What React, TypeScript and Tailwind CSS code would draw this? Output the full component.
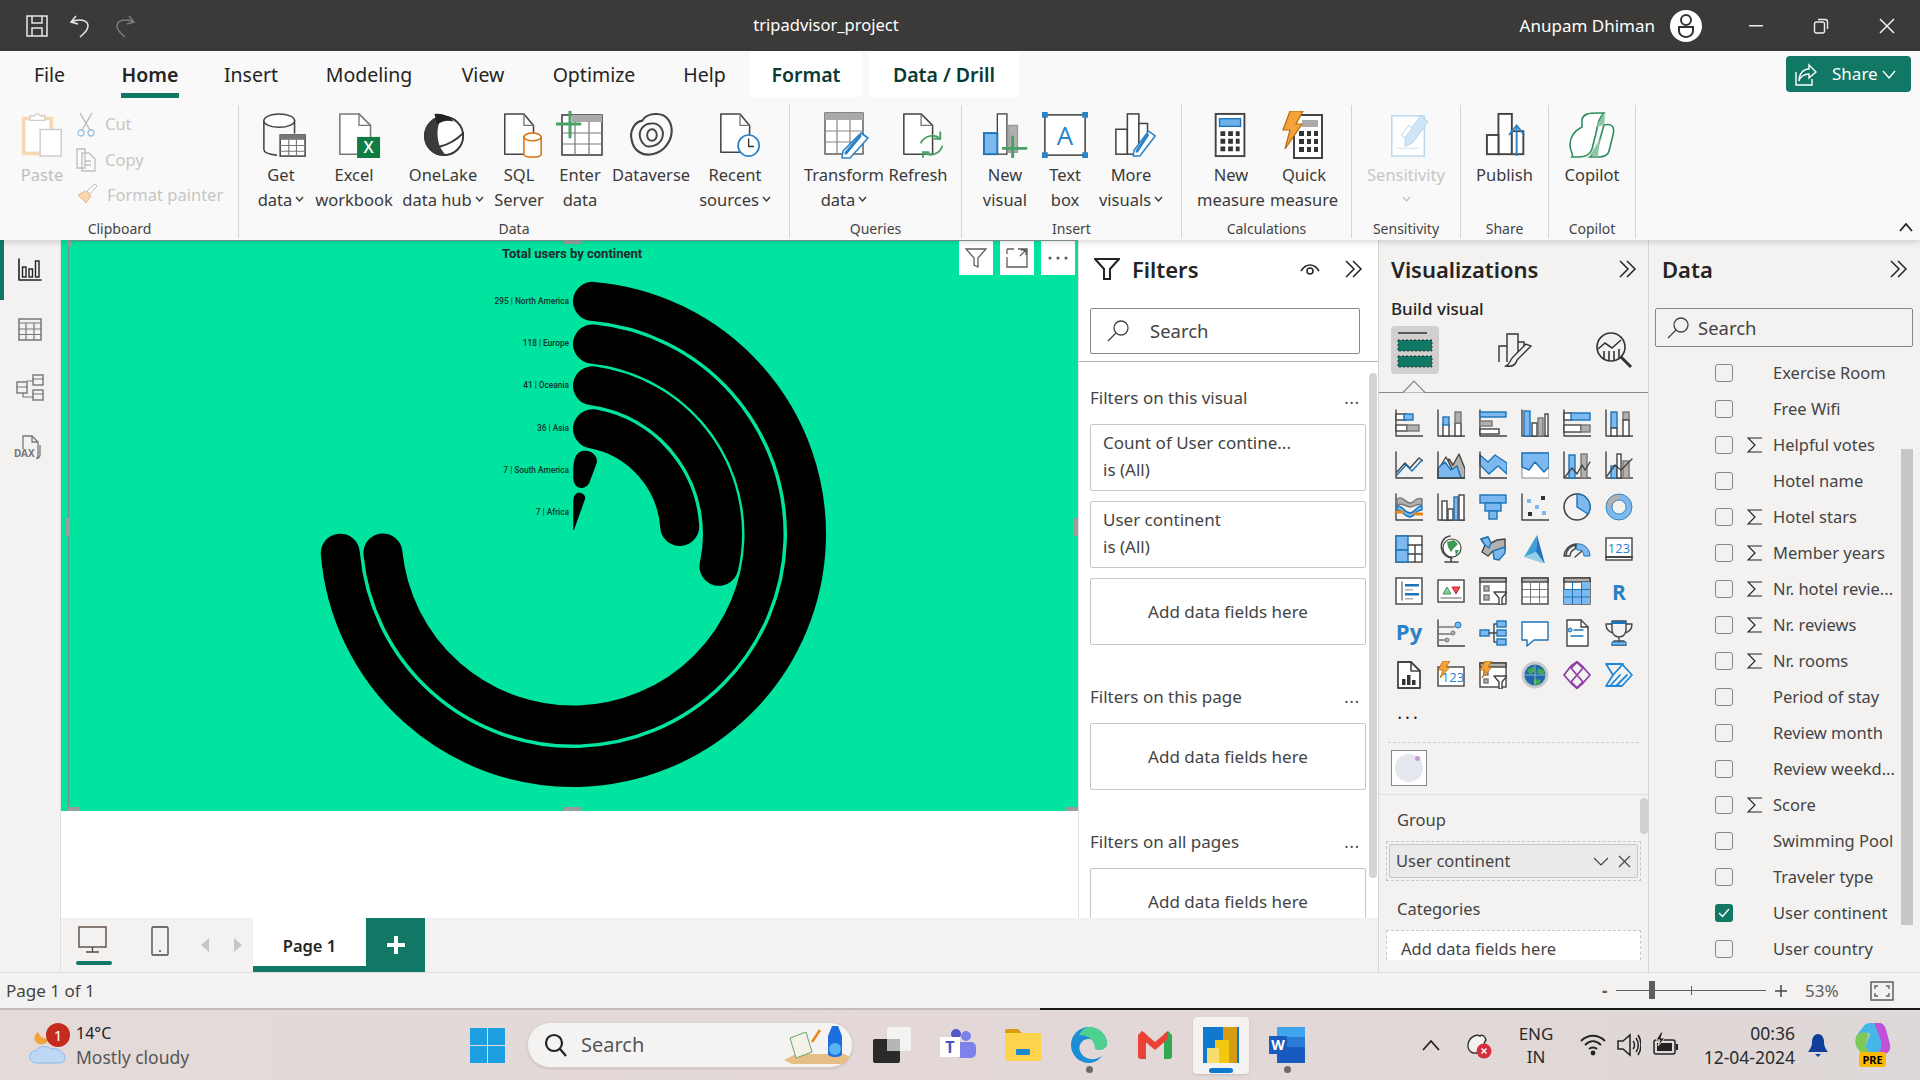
import { ReactNode } from "react";

const D = "#444444";
const B = "#1b74b8";
const L = "#7db9ee";
const G = "#b3b0ad";

// one bar or table cell in the small icons
function R({ x, y, w, h, f = "none", s = D, sw = 1.4 }: { x: number; y: number; w: number; h: number; f?: string; s?: string; sw?: number }) {
  return <rect x={x} y={y} width={w} height={h} fill={f} stroke={s} strokeWidth={sw} />;
}

function P({ d, f = "none", s = D, sw = 1.4 }: { d: string; f?: string; s?: string; sw?: number }) {
  return <path d={d} fill={f} stroke={s} strokeWidth={sw} strokeLinejoin="round" strokeLinecap="round" />;
}

function Ico({ size = 28, box = 28, children }: { size?: number; box?: number; children: ReactNode }) {
  return (
    <svg width={size} height={size} viewBox={`0 0 ${box} ${box}`} fill="none" className="shrink-0">
      {children}
    </svg>
  );
}

const axes = <P d="M1 1V27H28" />;
const table = (
  <>
    <R x={1} y={1} w={26} h={26} f="#fff" />
    <R x={1} y={1} w={26} h={4} f={G} />
    <P d="M9.5 5V27M18.5 5V27M1 12.500H27M1 20H27" s="#777" sw={1} />
  </>
);

const vizIcons: ReactNode[] = [
  <>{axes}<R x={1} y={5} w={10} h={6} f="#fff" /><R x={9} y={5} w={9} h={6} f={L} s={B} /><R x={1} y={16} w={11} h={6} f="#fff" /><R x={12} y={16} w={12} h={6} f={G} s="#777" /></>,
  <>{axes}<R x={6} y={15} w={6} h={12} f="#fff" /><R x={6} y={8} w={6} h={8} f={L} s={B} /><R x={18} y={14} w={6} h={13} f="#fff" /><R x={18} y={3} w={6} h={11} f={G} s="#777" /></>,
  <>{axes}<R x={1} y={3} w={26} h={5} f={L} s={B} /><R x={1} y={12} w={12} h={5} f={G} s="#777" /><R x={1} y={20} w={19} h={5} f="#fff" /></>,
  <>{axes}<R x={3} y={2} w={6} h={25} f={L} s={B} /><R x={11} y={14} w={5} h={13} f="#fff" /><R x={17} y={9} w={5} h={18} f={G} s="#777" /><R x={24} y={5} w={3} h={22} f="#fff" /></>,
  <>{axes}<R x={1} y={4} w={8} h={7} f="#fff" /><R x={8} y={4} w={19} h={7} f={L} s={B} /><R x={1} y={16} w={17} h={7} f="#fff" /><R x={18} y={16} w={9} h={7} f={G} s="#777" /></>,
  <>{axes}<R x={6} y={3} w={6} h={16} f={L} s={B} /><R x={6} y={19} w={6} h={8} f="#fff" /><R x={18} y={3} w={6} h={8} f={G} s="#777" /><R x={18} y={11} w={6} h={16} f="#fff" /></>,

  <>{axes}<P d="M2 21L10 12L15 17L24 7L28 10" /><P d="M2 24L11 14L17 20L27 9" s={B} /></>,
  <><P d="M1 27L12 8L16 14L22 3L28 18V27Z" f={G} /><P d="M1 27V19L9 6L15 18L18 21L24 27Z" f="#fff" /><P d="M1 27V17L8 11L14 19L20 15L24 27Z" f={L} s={B} />{axes}</>,
  <><P d="M1 4L9 11L16 4L28 12V23L19 15L10 23L1 14Z" f={L} s={B} />{axes}</>,
  <><R x={1} y={2} w={27} h={25} f="#fff" s="#aaa" /><P d="M1 2H28V16L23 21L14 11L8 19L1 16Z" f={L} s={B} /></>,
  <>{axes}<R x={6} y={4} w={6} h={23} f={L} s={B} /><R x={18} y={3} w={6} h={24} f={G} s="#777" /><P d="M2 26L9 17L14 23L19 14L22 19L27 11" /></>,
  <>{axes}<R x={6} y={15} w={6} h={12} f={L} s={B} /><R x={18} y={10} w={6} h={17} f={G} s="#777" /><R x={12} y={3} w={4} h={24} f="#fff" /><P d="M2 25L10 14L16 19L27 8" /></>,

  <>{axes}<P d="M2 6C8 2 10 10 15 10C20 10 21 3 27 6V12C21 10 20 14 15 14C10 14 8 9 2 12Z" f={G} s="#777" /><P d="M2 13C8 12 9 20 15 20C21 20 21 12 27 13V17C21 16 20 24 15 24C9 24 8 17 2 17Z" f={L} s={B} /><P d="M2 19H8M20 21H27" s="#e8871e" sw={3} /></>,
  <>{axes}<R x={5} y={8} w={5} h={19} f="#fff" /><R x={11} y={16} w={5} h={11} f="#fff" /><R x={17} y={4} w={4} h={23} f={L} s={B} /><R x={22} y={2} w={5} h={25} f="#fff" /></>,
  <><R x={1} y={2} w={26} h={8} f={L} s={B} /><R x={6} y={10} w={16} h={8} f={L} s={B} /><R x={10} y={18} w={8} h={8} f={L} s={B} /></>,
  <>{axes}<rect x={6} y={6} width={4} height={4} fill={L} /><rect x={14} y={12} width={4} height={4} fill={L} /><rect x={21} y={18} width={4} height={4} fill={L} /><rect x={20} y={3} width={4} height={4} fill="#333" /><rect x={7} y={19} width={4} height={4} fill="#333" /></>,
  <><circle cx={14} cy={14} r={13} fill="#f3f2f1" stroke={D} strokeWidth={1.5} /><P d="M14 14V1A13 13 0 0 1 25 21Z" f={L} s={B} /></>,
  <><circle cx={14} cy={14} r={10} stroke={L} strokeWidth={6} /><path d="M14 4A10 10 0 0 0 4 14" stroke={G} strokeWidth={6} /><circle cx={14} cy={14} r={13} stroke={B} strokeWidth={0.8} /><circle cx={14} cy={14} r={7} stroke={B} strokeWidth={0.8} /></>,

  <><R x={1} y={1} w={26} h={26} f="#fff" /><R x={1} y={1} w={12} h={14} f={L} s={B} /><R x={1} y={15} w={12} h={12} f={L} s={B} /><P d="M13 10H27M20 10V27M13 19H27" /></>,
  <><circle cx={15} cy={13} r={9} fill="#fff" stroke={D} strokeWidth={1.2} /><path d="M10 7L17 5L21 9L17 13L14 17L11 12Z M18 15L22 15L19 21Z" fill="#3a9a52" /><P d="M13 1C6 2 3 9 5 15C6 19 10 22 15 23M14 23V27M8 27H21" sw={1.6} /></>,
  <><P d="M2 4L9 2L12 8L18 5L26 4V15L20 17L14 16L9 21L3 17L6 10Z" f={G} /><P d="M2 4L9 2L12 8L10 13L6 10Z" f={L} s={B} /><P d="M14 16L20 14L26 12V18L20 25L15 24Z" f={L} s={B} /></>,
  <><path d="M16 0L3 22L15 17Z" fill="#3da1d6" /><path d="M16 0L15 17L24 29Z" fill="#1f72c4" /><path d="M15 17L3 22L24 29Z" fill="#5cb7e3" opacity={0.6} /></>,
  <><path d="M3 21A11 11 0 0 1 25 21" stroke={D} strokeWidth={1.4} /><path d="M13 9A12 12 0 0 1 27 21H21A6 6 0 0 0 14 15Z" fill={L} stroke={B} strokeWidth={1} /><P d="M1 21H7A8 8 0 0 1 12 14L13 9A13 13 0 0 0 1 21ZM12 22L19 16" sw={1.4} /></>,
  <><R x={1} y={3} w={26} h={22} f="#fff" /><P d="M1 22H27" sw={2} /><text x={14} y={18} textAnchor="middle" fontSize={13} fill="#2a82d0" fontFamily="'Open Sans',sans-serif">123</text></>,

  <><R x={1} y={1} w={26} h={26} f="#fff" /><P d="M7 5V23" s="#777" /><rect x={10} y={7} width={14} height={2.500} fill={B} /><rect x={10} y={12} width={8} height={1.500} fill={G} /><rect x={10} y={16} width={14} height={2.500} fill={B} /><rect x={10} y={21} width={8} height={1.500} fill={G} /></>,
  <><R x={1} y={3} w={26} h={22} f="#fff" /><P d="M4 21H24" s="#999" /><path d="M6 17L10 10L14 17Z" fill="#8ccf9b" stroke="#3a9a52" /><path d="M15 10H23L19 17Z" fill="#e8505b" stroke="#c4262e" /></>,
  <><R x={1} y={1} w={26} h={26} f="#fff" /><R x={1} y={1} w={26} h={4} f={G} /><R x={5} y={9} w={5} h={5} f={G} s="#777" /><R x={5} y={18} w={5} h={5} f={G} s="#777" /><P d="M15 15H28L23 21V28L20 28V21Z" f="#fff" /></>,
  <>{table}</>,
  <>{table}<rect x={18.500} y={5} width={8.500} height={7.500} fill={L} /><rect x={1} y={12.500} width={8.500} height={7.500} fill={L} /><rect x={9.500} y={12.500} width={17.500} height={7.500} fill={L} /><rect x={1} y={20} width={26} height={7} fill={L} /><P d="M9.500 5V27M18.500 5V27M1 12.500H27M1 20H27" s={B} sw={1} /></>,
  <text x={14} y={23} textAnchor="middle" fontSize={21} fontWeight={700} fill="#2a7fc4" fontFamily="'Open Sans',sans-serif">R</text>,

  <text x={14} y={21} textAnchor="middle" fontSize={22} fontWeight={700} fill="#2a82c7" fontFamily="'Open Sans',sans-serif">Py</text>,
  <>{axes}<P d="M1 8H17M1 15H14M1 21H9" s="#777" /><circle cx={21} cy={6} r={3} fill={L} stroke={B} /><circle cx={16} cy={14} r={2} fill={G} stroke="#777" /><circle cx={10} cy={21} r={2} fill={G} stroke="#777" /></>,
  <><R x={1} y={11} w={9} h={6} f={L} s={B} /><P d="M10 14H15M15 5V23M15 5H18M15 14H18M15 23H18" /><R x={18} y={2} w={9} h={6} f={L} s={B} /><R x={18} y={11} w={9} h={6} f={L} s={B} /><R x={18} y={20} w={9} h={6} f={L} s={B} /></>,
  <P d="M1 3H27V21H13L6 27V21H1Z" f="#fff" s={B} />,
  <><P d="M4 1H18L25 8V27H4Z" f="#fff" /><P d="M18 1V8H25" /><circle cx={7} cy={11} r={2} fill={L} stroke={B} /><P d="M11 11H20" s={B} /><P d="M8 17H20" s={B} /></>,
  <><P d="M7 2H21V11C21 16 17 18 14 18C11 18 7 16 7 11ZM7 5H1C1 11 4 13 8 14M21 5H27C27 11 24 13 20 14M14 18V22M9 22H19L21 26H7Z" /><rect x={7} y={2} width={14} height={3} fill={B} /><rect x={7} y={23} width={14} height={3} fill={L} stroke={B} /></>,

  <><P d="M3 1H16L25 10V27H3Z" f="#fff" sw={1.8} /><P d="M16 1V10H25" sw={1.6} /><rect x={7} y={18} width={3.500} height={6} fill="#333" /><rect x={12} y={14} width={3.500} height={10} fill="#333" /><rect x={17} y={19} width={3.500} height={5} fill="#333" /></>,
  <><R x={1} y={6} w={26} h={19} f="#fff" /><text x={16} y={21} textAnchor="middle" fontSize={13} fill="#2a82d0" fontFamily="'Open Sans',sans-serif">123</text><path d="M6 0H13L9 6H13L3 17L6 9H1Z" fill="#f2a33a" stroke="#b96b0c" strokeWidth={0.8} /></>,
  <><R x={1} y={2} w={26} h={24} f="#fff" /><R x={1} y={2} w={26} h={4} f={G} /><R x={5} y={10} w={4} h={4} f={G} s="#777" /><R x={5} y={18} w={4} h={4} f={G} s="#777" /><P d="M15 15H28L23 21V28L20 28V21Z" f="#fff" /><path d="M6 0H13L9 6H13L3 17L6 9H1Z" fill="#f2a33a" stroke="#b96b0c" strokeWidth={0.8} /></>,
  <><circle cx={14} cy={14} r={13.500} fill="#c9c9c9" /><circle cx={14} cy={14} r={10.500} fill="#1f68ad" /><path d="M6 9L13 5L14 10L9 14ZM17 7L24 10L22 14L16 12ZM13 18L20 19L18 24L13 23Z" fill="#3fa850" /><P d="M4 14H24M14 4V24" s="#d7d7d7" sw={0.6} /></>,
  <><P d="M8 5L14 0.800L20 6L27 14L20 22L14 27.200L8 22L1 14Z" s="#8f3fa5" sw={1.8} /><P d="M14 1L20 7L14 14L8 7ZM14 14L20 21L14 27L8 21Z" s="#8f3fa5" sw={1.8} /></>,
  <><P d="M1 3H17L27 14L17 25H1L8 14Z" s="#1f88d9" sw={1.8} /><P d="M8 14L18 3M5 25L15 14M11 25L22 14" s="#1f88d9" sw={1.8} /></>,
];

const fields = [
  ["Exercise Room", 0],
  ["Free Wifi", 0],
  ["Helpful votes", 1],
  ["Hotel name", 0],
  ["Hotel stars", 1],
  ["Member years", 1],
  ["Nr. hotel revie...", 1],
  ["Nr. reviews", 1],
  ["Nr. rooms", 1],
  ["Period of stay", 0],
  ["Review month", 0],
  ["Review weekd...", 0],
  ["Score", 1],
  ["Swimming Pool", 0],
  ["Traveler type", 0],
  ["User continent", 0],
  ["User country", 0],
] as const;

const tabs = [
  ["File", "w-[99px]", ""],
  ["Home", "w-[102px]", "font-semibold"],
  ["Insert", "w-[100px]", ""],
  ["Modeling", "w-[136px]", ""],
  ["View", "w-[92px]", ""],
  ["Optimize", "w-[130px]", ""],
  ["Help", "w-[91px]", ""],
];

function Chevrons() {
  return (
    <svg width="20" height="20" viewBox="0 0 20 20" fill="none" stroke="#252423" strokeWidth="1.5">
      <path d="M2 2L10 10L2 18M9 2L17 10L9 18" />
    </svg>
  );
}

function SearchGlyph() {
  return (
    <svg width="24" height="24" viewBox="0 0 24 24" fill="none" stroke="#444" strokeWidth="1.3">
      <circle cx="15" cy="9" r="7" />
      <path d="M10 14L2 22" />
    </svg>
  );
}

function Dots() {
  return <span className="text-[#444] text-[16px] leading-none tracking-[1px]">...</span>;
}

function FilterCard({ a, b }: { a: string; b: string }) {
  return (
    <div className="w-[276px] h-[67px] border border-[#c8c6c4] rounded-[2px] pl-[12px] pt-[4px] text-[17px] leading-[27px] text-[#444]">
      <div>{a}</div>
      <div>{b}</div>
    </div>
  );
}

function AddCard() {
  return (
    <div className="w-[276px] h-[67px] shrink-0 border border-[#c8c6c4] rounded-[2px] flex items-center justify-center text-[17px] text-[#444]">
      Add data fields here
    </div>
  );
}

function RibbonBtn({ w, icon, a, b, caret, off, ic = "" }: { w: string; icon: ReactNode; a: string; b?: string; caret?: boolean; off?: boolean; ic?: string }) {
  return (
    <div className={`${w} flex flex-col items-center shrink-0 ${off ? "text-[#c8c6c4]" : "text-[#3b3a39]"}`}>
      <div className={`h-[51px] pb-[4px] flex items-center justify-center ${ic}`}>{icon}</div>
      <div className="h-[25px] leading-[25px] whitespace-nowrap">{a}</div>
      <div className="h-[25px] leading-[25px] whitespace-nowrap flex items-center gap-[3px]">
        {b}
        {caret && (
          <svg width="9" height="7" viewBox="0 0 9 7" fill="none" stroke="currentColor" strokeWidth="1.4">
            <path d="M1 1L4.500 5L8 1" />
          </svg>
        )}
      </div>
    </div>
  );
}

function Group({ w, pl, label, children }: { w: string; pl: string; label: string; children: ReactNode }) {
  return (
    <div className={`${w} h-[133px] shrink-0 border-r border-[#d6d4d2] flex flex-col`}>
      <div className={`${pl} h-[108px] flex pt-[6px] text-[16.500px]`}>{children}</div>
      <div className="mt-auto text-center text-[14px] leading-[18px] text-[#444]">{label}</div>
    </div>
  );
}

const icons = {
  getData: (
    <Ico size={46} box={48}>
      <P d="M3 9V39C3 42 8 44 16 45M35 9V22" sw={1.6} />
      <ellipse cx={19} cy={9} rx={16} ry={7} fill="#fff" stroke={D} strokeWidth={1.6} />
      <R x={20} y={24} w={26} h={22} f="#fff" sw={1.6} />
      <rect x={20} y={24} width={26} height={5} fill="#777" />
      <P d="M29 29V46M37 29V46M20 35H46M20 41H46" s="#777" sw={1.2} />
    </Ico>
  ),
  excel: (
    <Ico size={46} box={48}>
      <P d="M4 2H24L36 14V44H4Z" f="#fff" s="#777" sw={1.6} />
      <P d="M24 2V14H36" s="#777" />
      <rect x={22} y={26} width={24} height={22} fill="#107c41" />
      <text x={34} y={43} textAnchor="middle" fontSize={17} fontWeight={600} fill="#fff" fontFamily="'Open Sans',sans-serif">X</text>
    </Ico>
  ),
  onelake: (
    <Ico size={46} box={48}>
      <circle cx={24} cy={25} r={20} fill="#fff" stroke="#333" strokeWidth={2} />
      <path d="M4 25C4 14 12 5 22 4C18 12 16 20 18 30C19 36 22 41 26 45C13 45 4 36 4 25Z" fill="#3a3a3a" />
      <path d="M14 2C22 1 30 4 34 10C28 8 22 9 17 13Z" fill="#222" />
      <P d="M20 36C28 34 36 30 44 22" s="#333" sw={2} />
    </Ico>
  ),
  sql: (
    <Ico size={46} box={48}>
      <P d="M6 2H26L36 14V44H6Z" f="#fff" sw={1.6} />
      <P d="M26 2V14H36" s="#777" />
      <P d="M26 26V44C26 48 44 48 44 44V26" f="#fff" s="#d9730d" sw={1.6} />
      <ellipse cx={35} cy={26} rx={9} ry={4} fill="#fff" stroke="#d9730d" strokeWidth={1.6} />
    </Ico>
  ),
  enter: (
    <Ico size={48} box={48}>
      <R x={6} y={4} w={40} h={40} f="#fff" sw={1.6} />
      <rect x={16} y={4} width={30} height={7} fill="#aaa" />
      <P d="M19 11V44M33 11V44M6 22H46M6 33H46" s="#777" sw={1.2} />
      <P d="M14 0V26M1 13H24" s="#47a266" sw={3} />
    </Ico>
  ),
  dataverse: (
    <Ico size={46} box={48}>
      <path d="M4 30C1 20 7 10 15 9C19 1 36 -1 42 8C48 16 46 28 40 35C33 44 20 47 12 42C7 39 5 35 4 30Z" stroke="#444" strokeWidth={2.200} />
      <path d="M13 28C10 19 17 12 24 12C33 11 38 19 36 26C34 34 24 38 18 35C15 33 14 31 13 28Z" stroke="#444" strokeWidth={2} />
      <ellipse cx={25} cy={24} rx={5} ry={6} stroke="#444" strokeWidth={2} />
    </Ico>
  ),
  recent: (
    <Ico size={46} box={48}>
      <P d="M4 2H24L34 14V42H4Z" f="#fff" sw={1.6} />
      <P d="M24 2V14H34" s="#777" />
      <circle cx={33} cy={35} r={11} fill="#fff" stroke="#2a82c7" strokeWidth={1.8} />
      <P d="M33 28V36H38" s="#333" sw={1.400} />
    </Ico>
  ),
  transform: (
    <Ico size={48} box={48}>
      <R x={3} y={2} w={38} h={41} f="#fff" s="#555" />
      <rect x={3} y={2} width={38} height={7} fill="#aaa" />
      <P d="M15 9V43M28 9V43M3 20H41M3 31H41" s="#888" sw={1.2} />
      <P d="M39 22L46 27L28 47L20 47L21 40Z" f="#fff" s="#2a82c7" sw={1.600} />
      <P d="M38 25L24 42" s="#2a82c7" sw={3} />
    </Ico>
  ),
  refresh: (
    <Ico size={46} box={48}>
      <P d="M4 2H22L34 14V44H4Z" f="#fff" sw={1.6} />
      <P d="M22 2V14H34" s="#777" />
      <P d="M22 32A13 13 0 0 1 42 28M44 36A13 13 0 0 1 24 42" s="#47a266" sw={2} />
      <P d="M42 21V28H36M24 47V42H30" s="#47a266" sw={2} />
    </Ico>
  ),
  newVisual: (
    <Ico size={46} box={48}>
      <R x={16} y={2} w={10} h={42} f="#fff" />
      <R x={28} y={14} w={9} h={28} f="#b3b0ad" s="#999" />
      <R x={2} y={22} w={14} h={22} f={L} s={B} sw={2} />
      <P d="M32 26V48M22 38H46" s="#47a266" sw={3} />
    </Ico>
  ),
  textBox: (
    <Ico size={46} box={48}>
      <R x={3} y={3} w={42} h={42} f="#fff" sw={1.6} />
      <rect x={0} y={0} width={6} height={6} fill="#2a82c7" />
      <rect x={42} y={0} width={6} height={6} fill="#2a82c7" />
      <rect x={0} y={42} width={6} height={6} fill="#2a82c7" />
      <rect x={42} y={42} width={6} height={6} fill="#2a82c7" />
      <text x={24} y={34} textAnchor="middle" fontSize={27} fill="#2a82c7" fontFamily="'Open Sans',sans-serif">A</text>
    </Ico>
  ),
  more: (
    <Ico size={46} box={48}>
      <R x={3} y={18} w={12} h={26} f="#fff" sw={1.6} />
      <R x={15} y={2} w={12} h={42} f="#fff" sw={1.6} />
      <R x={27} y={12} w={9} h={20} f="#fff" sw={1.6} />
      <P d="M37 20L44 25L28 46L21 46L22 40Z" f="#fff" s="#2a82c7" sw={1.6} />
      <P d="M36 24L25 41" s="#2a82c7" sw={3} />
    </Ico>
  ),
  measure: (
    <Ico size={46} box={48}>
      <R x={8} y={2} w={30} h={44} f="#fff" sw={2} />
      <R x={12} y={7} w={22} h={8} f="#6cb0ea" s={B} />
      <path d="M13 20H18V25H13ZM21 20H26V25H21ZM29 20H33V25H29ZM13 28H18V33H13ZM21 28H26V33H21ZM29 28H33V33H29ZM13 36H18V41H13ZM21 36H26V41H21ZM29 36H33V41H29Z" fill="#333" />
    </Ico>
  ),
  quick: (
    <Ico size={48} box={48}>
      <R x={16} y={4} w={28} h={43} f="#fff" sw={2} />
      <rect x={24} y={9} width={16} height={7} fill="#aaa" />
      <path d="M21 20H26V25H21ZM29 20H33V25H29ZM36 20H40V25H36ZM21 28H26V33H21ZM29 28H33V33H29ZM36 28H40V33H36ZM21 36H26V41H21ZM29 36H33V41H29ZM36 36H40V41H36Z" fill="#333" />
      <path d="M12 0H25L18 13H24L7 38L12 19H5Z" fill="#f2a33a" stroke="#b96b0c" strokeWidth={1.200} />
    </Ico>
  ),
  sens: (
    <Ico size={46} box={48}>
      <R x={6} y={4} w={34} h={42} f="#fff" s="#bcd9ee" sw={1.6} />
      <path d="M20 26L36 4L44 10L28 32L20 36Z" fill="#cfe4f4" stroke="#b5d4ea" />
      <path d="M16 24L24 14L27 17L20 27Z" fill="#fff" stroke="#b5d4ea" />
      <P d="M12 38H34" s="#d5e7f4" />
    </Ico>
  ),
  publish: (
    <Ico size={46} box={48}>
      <R x={14} y={2} w={14} h={42} f="#fff" sw={2} />
      <R x={2} y={24} w={12} h={20} f="#fff" sw={2} />
      <R x={28} y={20} w={12} h={24} f="#fff" sw={2} />
      <path d="M25 24L33 14L41 24M33 14V46" stroke="#2a82c7" strokeWidth={2} />
    </Ico>
  ),
  copilot: (
    <Ico size={48} box={48}>
      <path d="M14 8C16 3 20 2 30 2H36C30 8 30 14 28 22L24 38C22 44 18 46 10 46H4C6 44 2 40 2 34C2 26 6 20 14 16Z" fill="#fff" stroke="#2d8f5f" strokeWidth={1.6} />
      <path d="M36 14C44 12 47 16 45 24L41 40C40 45 36 46 30 46H22C28 42 30 36 32 28Z" fill="#fff" stroke="#2d8f5f" strokeWidth={1.6} />
      <path d="M28 16L36 2C38 4 36 14 36 14ZM22 44L32 28L30 46Z" fill="#8fc7a5" />
    </Ico>
  ),
  paste: (
    <Ico size={44} box={48}>
      <path d="M4 6H34V44H4Z" fill="#fff" stroke="#f5d9b5" strokeWidth={4} />
      <path d="M11 8V3H16L19 0L22 3H27V8Z" fill="#fff" stroke="#d0ceca" strokeWidth={1.400} />
      <R x={22} y={18} w={23} h={29} f="#fff" s="#cfcdca" sw={1.6} />
    </Ico>
  ),
};

const railIcons = [
  <Ico key="r" size={24} box={24}>
    <P d="M1 1V22H23" s="#222" sw={1.6} />
    <R x={4.500} y={9} w={3.500} h={10} s="#222" />
    <R x={11} y={11} w={3.500} h={8} s="#222" />
    <R x={17.500} y={3} w={3.500} h={16} s="#222" />
  </Ico>,
  <Ico key="t" size={24} box={24}>
    <R x={1} y={1} w={22} h={21} s="#777" sw={1.5} />
    <P d="M1 5H23M8 5V22M16 5V22M1 11H23M1 16.500H23" s="#777" sw={1.2} />
  </Ico>,
  <Ico key="m" size={28} box={28}>
    <R x={1} y={9} w={10} h={11} s="#777" sw={1.4} />
    <R x={17} y={2} w={10} h={10} s="#777" sw={1.4} />
    <R x={17} y={17} w={10} h={10} s="#777" sw={1.4} />
    <P d="M11 8H17M7 20V24H17M1 14H11M17 6H27M17 21H27" s="#777" sw={1.2} />
  </Ico>,
];

function Chart() {
  // arcs run clockwise from 12 o'clock, centre is the middle of the rings
  const cx = 512;
  const cy = 294;
  const point = (r: number, a: number) => {
    const t = (a * Math.PI) / 180;
    return `${cx + r * Math.sin(t)} ${cy - r * Math.cos(t)}`;
  };
  const rings = [
    [233.5, 265.3],
    [191, 264.3],
    [149.5, 102.5],
    [107, 86],
  ];
  return (
    <svg width="1016" height="571" viewBox="0 0 1016 571" className="absolute left-0 top-0">
      {rings.map(([r, end]) => {
        const start = (Math.asin(19.5 / r) * 180) / Math.PI;
        return (
          <path
            key={r}
            d={`M${point(r, start)}A${r} ${r} 0 ${end - start > 180 ? 1 : 0} 1 ${point(r, end)}`}
            stroke="#000"
            strokeWidth="39"
            strokeLinecap="round"
            fill="none"
          />
        );
      })}
      <path d="M512.300 230C512.300 217 516 210.700 524 210.700C532 210.700 537 217 535.700 223L528.300 243C526 247 522 248 520.700 248C515 248 512.300 243 512.300 238Z" fill="#000" />
      <path d="M512.300 261.700C512.300 255 515 252.700 518 252.700C522 252.700 525 256 524 259L513 290H512.300Z" fill="#000" />
    </svg>
  );
}

const chartLabels = ["295 | North America", "118 | Europe", "41 | Oceania", "36 | Asia", "7 | South America", "7 | Africa"];

function Taskbar() {
  return (
    <div className="relative h-[72px] shrink-0 flex items-center bg-gradient-to-r from-[#e4dad8] via-[#e3d8d7] to-[#dfd8d8] border-t-[2px] border-[#c4bdba] text-[#2b2b2b]">
      <div className="absolute left-[1040px] right-0 -top-[2px] h-[2px] bg-[#1a1a1a]" />
      <div className="relative ml-[29px] w-[47px] h-[44px] shrink-0">
        <svg width="38" height="44" viewBox="0 0 38 44" fill="none" className="absolute left-0 top-0">
          <path d="M9 9C11 14 15 16 20 16C18 21 12 23 8 20C4 17 5 12 9 9Z" fill="#f2a33a" />
          <path d="M8 40C2 40 0 36 1 32C2 29 4 28 7 28C9 23 18 22 22 26C28 24 36 29 36 35C36 38 34 40 30 40Z" fill="#bcd8f4" stroke="#8ebbe8" />
        </svg>
        <div className="absolute left-[17px] top-0 w-[24px] h-[24px] rounded-full bg-[#c42b1c] text-white text-[15px] leading-[24px] text-center">1</div>
      </div>
      <div className="w-[394px] shrink-0 text-[17.500px] leading-[24px] -mt-[1px]">
        <div className="text-[#222] text-[16px]">14°C</div>
        <div className="text-[#555]">Mostly cloudy</div>
      </div>
      <svg width="35" height="35" viewBox="0 0 35 35" className="shrink-0">
        <path d="M0 0H17V17H0ZM18 0H35V17H18ZM0 18H17V35H0ZM18 18H35V35H18Z" fill="#1e9fe0" />
      </svg>
      <div className="ml-[22px] w-[326px] h-[46px] shrink-0 rounded-full bg-[#f5f3f2] border border-[#d8d2d0] flex items-center pl-[16px] shadow-sm">
        <svg width="24" height="24" viewBox="0 0 24 24" fill="none" stroke="#222" strokeWidth="2.200" className="shrink-0">
          <circle cx="10" cy="10" r="8" />
          <path d="M16 16L22 23" />
        </svg>
        <span className="ml-[13px] text-[20px] text-[#555] w-[66px] shrink-0">Search</span>
        <svg width="66" height="42" viewBox="0 0 66 42" fill="none" className="ml-[137px] shrink-0">
          <path d="M0 36L12 30H60L66 33L60 40H8Z" fill="#e5bf86" />
          <path d="M6 14L22 8L28 28L12 34Z" fill="#f3f2e8" stroke="#6aa56a" />
          <path d="M28 18L36 6" stroke="#e8871e" strokeWidth="2.500" />
          <path d="M44 12L48 2H54L58 12V30C58 34 44 34 44 30Z" fill="#1d6fe0" />
          <ellipse cx="51" cy="25" rx="6" ry="6" fill="#57b4f2" />
        </svg>
      </div>
      <svg width="38" height="36" viewBox="0 0 38 36" className="ml-[20px] shrink-0">
        <rect x="14" y="0" width="24" height="24" rx="2" fill="#f5f3f2" />
        <rect x="0" y="12" width="27" height="24" rx="2" fill="#2a2a2a" />
        <rect x="14" y="12" width="13" height="12" fill="#b8b6b4" />
      </svg>
      <svg width="36" height="32" viewBox="0 0 36 32" className="ml-[29px] shrink-0">
        <circle cx="26" cy="7" r="5" fill="#7b83eb" />
        <rect x="16" y="13" width="20" height="16" rx="5" fill="#7b83eb" />
        <circle cx="16" cy="5" r="5" fill="#5059c9" />
        <rect x="0" y="8" width="20" height="20" fill="#fff" />
        <text x="10" y="24" textAnchor="middle" fontSize="16" fontWeight="700" fill="#4b53bc" fontFamily="'Open Sans',sans-serif">T</text>
      </svg>
      <svg width="36" height="32" viewBox="0 0 36 32" className="ml-[29px] shrink-0">
        <path d="M0 2C0 1 1 0 2 0H13L17 4H0Z" fill="#d89b12" />
        <rect x="0" y="4" width="36" height="28" rx="2" fill="#fcd34d" />
        <rect x="11" y="20" width="14" height="6" rx="1" fill="#1e88d0" />
      </svg>
      <div className="relative ml-[30px] w-[36px] h-[36px] shrink-0">
        <svg width="36" height="36" viewBox="0 0 36 36">
          <path d="M18 0C28 0 36 8 36 16C36 22 30 24 24 22C28 18 24 12 18 12C10 12 6 20 10 26C14 33 24 34 31 29C27 34 22 36 18 36C8 36 0 28 0 18C0 8 8 0 18 0Z" fill="#1b8ed4" />
          <path d="M18 0C28 0 36 8 36 16C36 22 30 24 24 22C24 14 18 8 8 8C11 3 14 0 18 0Z" fill="#4ed08e" />
        </svg>
        <div className="absolute left-[15px] top-[39px] w-[7px] h-[7px] rounded-full bg-[#6b6b6b]" />
      </div>
      <svg width="34" height="28" viewBox="0 0 34 28" className="ml-[31px] shrink-0">
        <path d="M0 4L4 0L8 3V28H3C1 28 0 27 0 25Z" fill="#ea4335" />
        <path d="M34 4L30 0L26 3V28H31C33 28 34 27 34 25Z" fill="#34a853" />
        <path d="M4 0L17 11L30 0L30 8L17 19L4 8Z" fill="#ea4335" />
      </svg>
      <div className="relative ml-[21px] w-[56px] h-[57px] shrink-0 rounded-[4px] bg-[#f5f3f2] shadow-sm flex items-center justify-center">
        <svg width="36" height="36" viewBox="0 0 36 36">
          <rect width="36" height="36" fill="#0f79d0" />
          <rect x="20" y="0" width="14" height="36" fill="#d89b12" />
          <rect x="12" y="13" width="14" height="23" fill="#f2c811" />
          <rect x="4" y="21" width="12" height="15" fill="#f7dc6f" />
        </svg>
        <div className="absolute left-[16px] bottom-[1px] w-[24px] h-[5px] rounded-full bg-[#0f79d0]" />
      </div>
      <div className="relative ml-[20px] w-[36px] h-[36px] shrink-0">
        <svg width="36" height="36" viewBox="0 0 36 36">
          <rect x="8" y="0" width="28" height="36" rx="2" fill="#2b7cd3" />
          <rect x="8" y="0" width="28" height="10" fill="#41a5ee" />
          <rect x="8" y="20" width="28" height="16" fill="#185abd" />
          <rect x="0" y="9" width="18" height="18" rx="1" fill="#185abd" />
          <text x="9" y="23" textAnchor="middle" fontSize="14" fontWeight="700" fill="#fff" fontFamily="'Open Sans',sans-serif">W</text>
        </svg>
        <div className="absolute left-[15px] top-[39px] w-[7px] h-[7px] rounded-full bg-[#6b6b6b]" />
      </div>
      <svg width="18" height="12" viewBox="0 0 18 12" fill="none" stroke="#222" strokeWidth="1.800" className="ml-[117px] shrink-0">
        <path d="M1 11L9 2L17 11" />
      </svg>
      <svg width="26" height="28" viewBox="0 0 26 28" className="ml-[27px] shrink-0">
        <path d="M6 22C1 20 0 15 2 10C4 6 9 3 13 5C15 3 18 5 19 9C17 11 17 14 17 16L12 22Z" fill="#f3f2f1" stroke="#333" strokeWidth="1.500" />
        <circle cx="17" cy="20" r="7.500" fill="#d32f3c" />
        <path d="M14.500 17.500L19.500 22.500M19.500 17.500L14.500 22.500" stroke="#fff" strokeWidth="1.500" />
      </svg>
      <div className="ml-[25px] w-[36px] shrink-0 text-center text-[17px] leading-[23px]">
        <div>ENG</div>
        <div>IN</div>
      </div>
      <svg width="26" height="26" viewBox="0 0 26 26" fill="none" stroke="#222" strokeWidth="1.800" className="ml-[26px] shrink-0">
        <path d="M1 9C8 2 18 2 25 9M5 13C10 8 16 8 21 13M9 17C11 15 15 15 17 17" />
        <circle cx="13" cy="21" r="1.500" fill="#222" />
      </svg>
      <svg width="24" height="26" viewBox="0 0 24 26" fill="none" stroke="#222" strokeWidth="1.500" className="ml-[11px] shrink-0">
        <path d="M1 9H6L13 3V23L6 17H1Z" />
        <path d="M16 9C18 11 18 15 16 17M19 6C22 10 22 16 19 20M21 3C25 9 25 17 21 23" />
      </svg>
      <svg width="26" height="26" viewBox="0 0 26 26" className="ml-[12px] shrink-0">
        <rect x="1" y="8" width="21" height="14" rx="2" fill="none" stroke="#222" strokeWidth="1.500" />
        <rect x="4" y="11" width="15" height="8" fill="#222" />
        <rect x="23" y="12" width="2" height="6" fill="#222" />
        <path d="M8 0L3 8H7L5 14L12 6H8L10 0Z" fill="#222" stroke="#e3d9d8" />
      </svg>
      <div className="ml-[12px] w-[104px] shrink-0 text-right text-[17.500px] leading-[24px] whitespace-nowrap">
        <div>00:36</div>
        <div>12-04-2024</div>
      </div>
      <svg width="20" height="23" viewBox="0 0 20 23" className="ml-[13px] shrink-0">
        <path d="M10 0C14 0 16 4 16 8C16 13 18 15 20 18H0C2 15 4 13 4 8C4 4 6 0 10 0Z" fill="#123f9a" />
        <path d="M7 20H13L10 23Z" fill="#123f9a" />
      </svg>
      <div className="relative ml-[27px] w-[36px] h-[44px] shrink-0">
        <svg width="36" height="34" viewBox="0 0 36 34">
          <path d="M8 4C10 1 12 0 15 0H24C28 0 30 3 31 7L35 22C36 27 33 31 28 31H13C10 31 8 29 9 26L15 11C13 9 10 9 8 13L3 26C0 22 0 16 2 12Z" fill="#46b5e8" />
          <path d="M19 0H24C28 0 30 3 31 7L35 22C36 27 33 31 28 31H22C27 27 27 22 26 18L22 7C21 4 20 2 19 0Z" fill="#c44fd8" />
          <path d="M2 12C0 16 0 22 3 26C6 31 10 31 13 31H18C13 29 10 25 11 20L14 11C10 9 5 9 2 12Z" fill="#7ec854" />
        </svg>
        <div className="absolute left-[4px] top-[29px] w-[27px] h-[15px] rounded-[3px] bg-[#ffb900] text-[11px] leading-[15px] font-bold text-center text-black">PRE</div>
      </div>
    </div>
  );
}

export default function App() {
  return (
    <div className="w-[1920px] h-[1080px] overflow-hidden flex flex-col bg-[#f3f2f1] font-['Noto_Sans',sans-serif] text-[#252423]">
      {/* title bar */}
      <div className="h-[51px] shrink-0 bg-[#3b3a38] flex items-center text-white">
        <svg width="24" height="24" viewBox="0 0 24 24" fill="none" stroke="#e8e8e8" strokeWidth="1.500" className="ml-[25px]">
          <path d="M2 2H22V22H2ZM7 2V9H17V2M7 22V14H17V22" />
        </svg>
        <svg width="22" height="24" viewBox="0 0 22 24" fill="none" stroke="#e8e8e8" strokeWidth="1.500" className="ml-[20px]">
          <path d="M7 2L2 8L9 10M2 8C10 4 19 6 19 12C19 17 14 20 11 23" />
        </svg>
        <svg width="22" height="24" viewBox="0 0 22 24" fill="none" stroke="#7c7b79" strokeWidth="1.500" className="ml-[23px]">
          <path d="M15 2L20 8L13 10M20 8C12 4 3 6 3 12C3 17 8 20 11 23" />
        </svg>
        <div className="w-[614px] shrink-0" />
        <div className="w-[152px] text-center text-[16.500px]">tripadvisor_project</div>
        <div className="ml-auto text-[17px]">Anupam Dhiman</div>
        <div className="ml-[15px] w-[32px] h-[32px] rounded-full bg-white flex items-center justify-center">
          <svg width="20" height="26" viewBox="0 0 20 26" fill="none" stroke="#333" strokeWidth="2">
            <circle cx="10" cy="7" r="5" />
            <path d="M3 14H17V18C17 22 13 24 10 24C7 24 3 22 3 18Z" />
          </svg>
        </div>
        <svg width="14" height="2" viewBox="0 0 14 2" className="ml-[47px]">
          <rect width="14" height="1.500" fill="#eee" />
        </svg>
        <svg width="16" height="16" viewBox="0 0 16 16" fill="none" stroke="#eee" strokeWidth="1.400" className="ml-[50px]">
          <rect x="1.500" y="4" width="10" height="11" rx="2" />
          <path d="M5 1.500H12C13.500 1.500 14.500 2.500 14.500 4V11" />
        </svg>
        <svg width="16" height="16" viewBox="0 0 16 16" fill="none" stroke="#eee" strokeWidth="1.500" className="ml-[50px] mr-[25px]">
          <path d="M1 1L15 15M15 1L1 15" />
        </svg>
      </div>

      {/* ribbon */}
      <div className="relative z-10 h-[189px] shrink-0 bg-[#f9f9f9] shadow-[0_2px_6px_rgba(0,0,0,0.15)]">
        <div className="h-[46px] pt-[2px] flex items-center">
          {tabs.map(([t, w, extra]) => (
            <div key={t} className={`${w} h-[44px] flex items-center justify-center text-[19.500px] relative text-[#252423] ${extra}`}>
              {t}
              {t === "Home" && <div className="absolute left-[22px] w-[58px] -bottom-[1px] h-[5px] bg-[#117865]" />}
            </div>
          ))}
          <div className="w-[112px] h-[46px] -mt-[2px] bg-white flex items-center justify-center pt-[2px] text-[19.500px] font-semibold text-[#0b3a36]">Format</div>
          <div className="ml-[7px] w-[150px] h-[46px] -mt-[2px] bg-white flex items-center justify-center pt-[2px] text-[19.500px] font-semibold text-[#0b3a36]">Data / Drill</div>
          <div className="ml-auto mr-[9px] w-[125px] h-[36px] -mt-[2px] bg-[#117865] rounded-[4px] flex items-center text-white text-[17px]">
            <svg width="22" height="24" viewBox="0 0 22 24" fill="none" stroke="#fff" strokeWidth="1.400" className="ml-[9px]">
              <path d="M14 3L21 10L14 16V12C9 12 5 15 4 19C4 12 8 7 14 7ZM1 10V23H17V17" />
            </svg>
            <span className="ml-[15px]">Share</span>
            <svg width="14" height="9" viewBox="0 0 14 9" fill="none" stroke="#fff" strokeWidth="1.400" className="ml-[4px]">
              <path d="M1 1L7 8L13 1" />
            </svg>
          </div>
        </div>

        <div className="flex pt-[8px]">
          <div className="w-[239px] h-[133px] shrink-0 border-r border-[#d6d4d2] flex flex-col">
            <div className="flex h-[108px] pt-[6px]">
              <div className="w-[84px] flex flex-col items-center text-[#c0bebc] text-[16.500px]">
                <div className="h-[51px] pb-[4px] flex items-center">{icons.paste}</div>
                <div className="leading-[25px]">Paste</div>
              </div>
              <div className="flex flex-col text-[16.500px] text-[#c8c6c4] -mt-[4px] -ml-[8px]">
                <div className="h-[36px] flex items-center gap-[9px]">
                  <svg width="20" height="26" viewBox="0 0 20 26" fill="none" stroke="#b5b5b5" strokeWidth="1.300" className="shrink-0">
                    <path d="M4 1L14 18M16 1L6 18" />
                    <circle cx="5" cy="21" r="3" stroke="#9cc4e4" />
                    <circle cx="15" cy="21" r="3" stroke="#9cc4e4" />
                  </svg>
                  Cut
                </div>
                <div className="h-[36px] flex items-center gap-[9px]">
                  <svg width="20" height="24" viewBox="0 0 20 24" fill="none" stroke="#c0bebc" strokeWidth="1.300" className="shrink-0">
                    <path d="M1 1H9V20H1ZM6 5H13L19 11V23H6ZM9 13H15M9 17H15" fill="#fafafa" />
                  </svg>
                  Copy
                </div>
                <div className="h-[36px] flex items-center gap-[9px] whitespace-nowrap">
                  <svg width="22" height="24" viewBox="0 0 22 24" fill="none" className="shrink-0">
                    <path d="M2 12L10 20L15 13L9 8Z" fill="#f7d5ae" stroke="#e8bb8c" />
                    <path d="M11 8L19 1L21 3L14 11Z" fill="#fff" stroke="#c0bebc" />
                  </svg>
                  Format painter
                </div>
              </div>
            </div>
            <div className="mt-auto pl-[1px] text-center text-[14px] leading-[18px] text-[#444]">Clipboard</div>
          </div>

          <Group w="w-[551px]" pl="pl-[11px]" label="Data">
            <RibbonBtn w="w-[62px]" ic="ml-[6px]" icon={icons.getData} a="Get" b="data" caret />
            <RibbonBtn w="w-[84px]" ic="ml-[9px]" icon={icons.excel} a="Excel" b="workbook" />
            <RibbonBtn w="w-[94px]" ic="ml-[2px]" icon={icons.onelake} a="OneLake" b="data hub" caret />
            <RibbonBtn w="w-[58px]" ic="ml-[5px]" icon={icons.sql} a="SQL" b="Server" />
            <RibbonBtn w="w-[64px]" icon={icons.enter} a="Enter" b="data" />
            <RibbonBtn w="w-[78px]" icon={icons.dataverse} a="Dataverse" />
            <RibbonBtn w="w-[90px]" ic="ml-[9px]" icon={icons.recent} a="Recent" b="sources" caret />
          </Group>
          <Group w="w-[172px]" pl="pl-[14px]" label="Queries">
            <RibbonBtn w="w-[80px]" ic="ml-[4px]" icon={icons.transform} a="Transform" b="data" caret />
            <RibbonBtn w="w-[68px]" ic="ml-[9px]" icon={icons.refresh} a="Refresh" />
          </Group>
          <Group w="w-[220px]" pl="pl-[16px]" label="Insert">
            <RibbonBtn w="w-[54px]" icon={icons.newVisual} a="New" b="visual" />
            <RibbonBtn w="w-[66px]" icon={icons.textBox} a="Text" b="box" />
            <RibbonBtn w="w-[66px]" ic="ml-[9px]" icon={icons.more} a="More" b="visuals" caret />
          </Group>
          <Group w="w-[170px]" pl="pl-[8px]" label="Calculations">
            <RibbonBtn w="w-[82px]" icon={icons.measure} a="New" b="measure" />
            <RibbonBtn w="w-[64px]" ic="-ml-[4px]" icon={icons.quick} a="Quick" b="measure" />
          </Group>
          <Group w="w-[109px]" pl="pl-0" label="Sensitivity">
            <RibbonBtn w="w-[108px]" ic="ml-[6px]" icon={icons.sens} a="Sensitivity" caret off />
          </Group>
          <Group w="w-[88px]" pl="pl-0" label="Share">
            <RibbonBtn w="w-[87px]" ic="ml-[6px]" icon={icons.publish} a="Publish" />
          </Group>
          <Group w="w-[87px]" pl="pl-0" label="Copilot">
            <RibbonBtn w="w-[86px]" icon={icons.copilot} a="Copilot" />
          </Group>
          <svg width="14" height="9" viewBox="0 0 14 9" fill="none" stroke="#252423" strokeWidth="1.800" className="ml-[263px] mt-[118px]">
            <path d="M1 8L7 1L13 8" />
          </svg>
        </div>
      </div>

      {/* body */}
      <div className="h-[732px] shrink-0 flex">
        {/* view rail */}
        <div className="relative w-[61px] shrink-0 border-r border-[#e1dfdd] flex flex-col items-center pt-[18px]">
          <div className="absolute left-0 top-0 w-[4px] h-[60px] bg-[#117865]" />
          <div className="h-[60px] flex items-start justify-center">{railIcons[0]}</div>
          <div className="h-[56px] flex items-start justify-center">{railIcons[1]}</div>
          <div className="h-[62px] -mt-[1px] flex items-start justify-center">{railIcons[2]}</div>
          <div className="relative">
            <svg width="22" height="24" viewBox="0 0 22 24" fill="none" stroke="#777" strokeWidth="1.300">
              <path d="M4 14V1H13L19 7V21C19 22 18 23 17 23M13 1V7H19M21 10V20C21 22 20 23 18 24" />
            </svg>
            <span className="absolute -left-[5px] top-[12px] text-[10px] font-bold leading-[12px] text-[#777]">DAX</span>
          </div>
        </div>

        {/* canvas */}
        <div className="w-[1017px] shrink-0 flex flex-col">
          <div className="h-[678px] shrink-0 bg-white">
            <div className="relative h-[571px] bg-[#00e4a0]">
              <div className="absolute left-[7px] top-0 bottom-0 w-[1px] bg-[#6f8f86]" />
              <div className="absolute left-[7px] top-0 right-[1px] h-[1px] bg-[#8a9c96]" />
              <div className="absolute left-[6px] top-[1px] w-[5px] h-[5px] bg-[#9d9d9d]" />
              <div className="absolute left-[6px] bottom-0 w-[12px] h-[4px] bg-[#9d9d9d]" />
              <div className="absolute left-[503px] bottom-0 w-[18px] h-[4px] bg-[#9d9d9d]" />
              <div className="absolute left-[503px] top-0 w-[18px] h-[4px] bg-[#9d9d9d]" />
              <div className="absolute left-[5px] top-[278px] w-[4px] h-[18px] bg-[#9d9d9d]" />
              <div className="absolute right-0 top-[278px] w-[4px] h-[18px] bg-[#9d9d9d]" />
              <div className="absolute right-0 bottom-0 w-[12px] h-[4px] bg-[#9d9d9d]" />
              <Chart />
              <div className="absolute left-[441px] top-[4px] text-[13px] font-bold text-[#1d2b2b] font-['Roboto',sans-serif]">Total users by continent</div>
              <div className="absolute right-[509px] top-[40px] flex flex-col items-end font-['Roboto',sans-serif] text-[8.300px] font-medium text-[#10322a]">
                {chartLabels.map((t) => (
                  <div key={t} className="h-[42.200px] leading-[42px] whitespace-nowrap">{t}</div>
                ))}
              </div>
              <div className="absolute right-[3px] top-[1px] flex gap-[7px]">
                <div className="w-[34px] h-[34px] bg-white flex items-center justify-center">
                  <svg width="22" height="22" viewBox="0 0 22 22" fill="none" stroke="#605e5c" strokeWidth="1.300">
                    <path d="M1 2H21L13 11V20L9 18V11Z" />
                  </svg>
                </div>
                <div className="w-[34px] h-[34px] bg-white flex items-center justify-center">
                  <svg width="22" height="20" viewBox="0 0 22 20" fill="none" stroke="#605e5c" strokeWidth="1.300">
                    <path d="M12 1H21V19H1V9M14 8L20 2M15 2H20V7M1 1H8M1 1V6" />
                  </svg>
                </div>
                <div className="w-[34px] h-[34px] bg-white flex items-center justify-center text-[#605e5c]">
                  <svg width="20" height="4" viewBox="0 0 20 4" fill="#605e5c">
                    <circle cx="2" cy="2" r="1.600" />
                    <circle cx="10" cy="2" r="1.600" />
                    <circle cx="18" cy="2" r="1.600" />
                  </svg>
                </div>
              </div>
            </div>
          </div>
          {/* page tabs */}
          <div className="h-[54px] shrink-0 flex items-start">
            <div className="relative w-[64px] h-[46px] flex justify-center pt-[8px]">
              <svg width="30" height="28" viewBox="0 0 30 28" fill="none" stroke="#5a4a42" strokeWidth="1.400">
                <rect x="1" y="1" width="27" height="20" />
                <path d="M14.500 21V26M8 26H21" />
              </svg>
              <div className="absolute left-[15px] top-[43px] w-[36px] h-[4px] rounded-full bg-[#117865]" />
            </div>
            <div className="w-[30px] pt-[8px] ml-[25px]">
              <svg width="20" height="30" viewBox="0 0 20 30" fill="none" stroke="#444" strokeWidth="1.300">
                <rect x="2" y="1" width="16" height="28" rx="1" />
                <path d="M9 25H11" />
              </svg>
            </div>
            <svg width="8" height="14" viewBox="0 0 8 14" fill="#c8c6c4" className="ml-[21px] mt-[20px]">
              <path d="M8 0V14L0 7Z" />
            </svg>
            <svg width="8" height="14" viewBox="0 0 8 14" fill="#c8c6c4" className="ml-[25px] mt-[20px]">
              <path d="M0 0V14L8 7Z" />
            </svg>
            <div className="ml-[11px] w-[113px] h-[54px] bg-white border-b-[6px] border-[#117865] flex items-center justify-center pt-[8px] text-[16.500px] font-semibold">Page 1</div>
            <div className="w-[59px] h-[54px] bg-[#117865] flex items-center justify-center">
              <svg width="18" height="18" viewBox="0 0 18 18" fill="#fff">
                <path d="M7 0H11V7H18V11H11V18H7V11H0V7H7Z" />
              </svg>
            </div>
          </div>
        </div>

        {/* filters */}
        <div className="w-[301px] shrink-0 border-r border-[#d6d4d2] flex flex-col">
          <div className="relative h-[678px] shrink-0 bg-white overflow-hidden border-l border-[#e1dfdd]">
            <div className="h-[58px] mb-[10px] flex items-center pl-[15px] pr-[14px]">
              <svg width="26" height="24" viewBox="0 0 26 24" fill="none" stroke="#252423" strokeWidth="2">
                <path d="M1 2H25L16 12V22H10V12Z" />
              </svg>
              <span className="ml-[12px] text-[22px] font-semibold">Filters</span>
              <svg width="20" height="14" viewBox="0 0 20 14" fill="none" stroke="#252423" strokeWidth="1.500" className="ml-auto">
                <path d="M1 9C6 1 14 1 19 9" />
                <circle cx="10" cy="9" r="3" />
              </svg>
              <div className="ml-[24px]"><Chevrons /></div>
            </div>
            <div className="ml-[11px] w-[270px] h-[46px] border border-[#8a8886] rounded-[2px] flex items-center pl-[15px] text-[18.500px] text-[#444]">
              <SearchGlyph />
              <span className="ml-[20px] -mt-[1px]">Search</span>
            </div>
            <div className="mt-[7px] h-[1px] bg-[#b3b0ad]" />
            <div className="pl-[11px] pr-[15px]">
              <div className="h-[62px] flex items-center justify-between text-[17px] text-[#444] pt-[10px] pr-[3px]">
                <span>Filters on this visual</span>
                <Dots />
              </div>
              <div className="flex flex-col gap-[10px]">
                <FilterCard a="Count of User contine..." b="is (All)" />
                <FilterCard a="User continent" b="is (All)" />
                <AddCard />
              </div>
              <div className="h-[78px] pt-[26px] flex items-center justify-between text-[17px] text-[#444] pr-[3px]">
                <span>Filters on this page</span>
                <Dots />
              </div>
              <AddCard />
              <div className="h-[78px] pt-[26px] flex items-center justify-between text-[17px] text-[#444] pr-[3px]">
                <span>Filters on all pages</span>
                <Dots />
              </div>
              <AddCard />
            </div>
            <div className="absolute left-[290px] top-[133px] w-[8px] h-[505px] rounded-full bg-[#d6d4d2]" />
          </div>
        </div>

        {/* visualizations */}
        <div className="relative w-[270px] shrink-0 border-r border-[#d6d4d2] overflow-hidden">
          <div className="h-[58px] mb-[2px] pl-[12px] pr-[10px] flex items-center">
            <span className="text-[22px] font-semibold">Visualizations</span>
            <div className="ml-auto"><Chevrons /></div>
          </div>
          <div className="pl-[12px] text-[17px] font-medium leading-[24px] h-[17px] flex items-center">Build visual</div>
          <div className="relative h-[67px] mt-[9px] flex items-start border-b border-[#8a8886] pl-[12px]">
            <div className="w-[48px] h-[48px] rounded-[4px] bg-[#d2d0ce] flex items-center justify-center">
              <svg width="36" height="36" viewBox="0 0 36 36" fill="none">
                <path d="M1 1H30" stroke="#333" strokeWidth="1.500" />
                <rect x="1" y="8" width="34" height="11" fill="#117865" stroke="#333" strokeDasharray="2 2" />
                <rect x="1" y="24" width="34" height="11" fill="#117865" stroke="#333" strokeDasharray="2 2" />
              </svg>
            </div>
            <svg width="34" height="36" viewBox="0 0 34 36" fill="none" stroke="#333" strokeWidth="1.400" className="ml-[59px] mt-[6px]">
              <path d="M1 30V14H9V30M9 20V2H20V20M20 10H26V14" />
              <path d="M33 14L19 28C18 33 14 35 8 34C12 32 12 28 15 25L28 12Z" fill="#f3f2f1" />
            </svg>
            <svg width="38" height="38" viewBox="0 0 38 38" fill="none" stroke="#333" strokeWidth="1.600" className="ml-[63px] mt-[5px]">
              <circle cx="16" cy="16" r="14" />
              <path d="M3 18L10 12L17 17L26 9M9 20V28M14 20V30M19 20V30M24 18V27" />
              <path d="M26 26L36 36" strokeWidth="3" />
            </svg>
            <svg width="26" height="13" viewBox="0 0 26 13" fill="#f3f2f1" stroke="#8a8886" strokeWidth="1.200" className="absolute left-[22px] -bottom-[1px]">
              <path d="M0 12.500H2L13 1L24 12.500H26" />
            </svg>
          </div>
          <div className="grid grid-cols-[repeat(6,42px)] auto-rows-[42px] pl-[9px] pt-[9px]">
            {vizIcons.map((ic, i) => (
              <div key={i} className="flex items-center justify-center">
                <Ico>{ic}</Ico>
              </div>
            ))}
            <div className="flex items-center justify-center pb-[10px]">
              <span className="text-[18px] leading-none tracking-[3px] text-[#252423]">...</span>
            </div>
          </div>
          <div className="mx-[9px] mt-[4px] border-t border-dashed border-[#d2d0ce]" />
          <div className="ml-[12px] mt-[7px] w-[36px] h-[36px] border border-[#8a8886] bg-white p-[3px]">
            <div className="relative w-full h-full rounded-full bg-[#e5e8ee]">
              <div className="absolute right-[3px] top-[2px] w-[5px] h-[5px] rounded-full bg-[#c49ad0]" />
            </div>
          </div>
          <div className="mt-[8px] border-t border-[#e1dfdd]" />
          <div className="pl-[18px] text-[16.500px] text-[#444] h-[46px] flex items-center pt-[4px]">Group</div>
          <div className="mx-[7px] h-[40px] border border-dashed border-[#c8c6c4] p-[2px]">
            <div className="h-full rounded-[2px] border border-[#c8c6c4] bg-[#eaeaea] flex items-center pl-[6px] pr-[6px] text-[16.500px] text-[#444]">
              <span>User continent</span>
              <svg width="16" height="9" viewBox="0 0 16 9" fill="none" stroke="#444" strokeWidth="1.200" className="ml-auto">
                <path d="M1 1L8 8L15 1" />
              </svg>
              <svg width="13" height="13" viewBox="0 0 13 13" fill="none" stroke="#444" strokeWidth="1.200" className="ml-[9px]">
                <path d="M1 1L12 12M12 1L1 12" />
              </svg>
            </div>
          </div>
          <div className="pl-[18px] h-[49px] flex items-center pt-[8px] text-[16.500px] text-[#444]">Categories</div>
          <div className="mx-[7px] h-[30px] bg-white border-x border-t border-dashed border-[#c8c6c4] pl-[14px] pt-[6px] text-[16.500px] leading-[24px] text-[#444]">Add data fields here</div>
          <div className="absolute left-[261px] top-[558px] w-[8px] h-[36px] rounded-full bg-[#d2d0ce]" />
        </div>

        {/* data */}
        <div className="relative w-[271px] shrink-0 overflow-hidden">
          <div className="h-[58px] mb-[10px] pl-[13px] pr-[11px] flex items-center">
            <span className="text-[22px] font-semibold">Data</span>
            <div className="ml-auto"><Chevrons /></div>
          </div>
          <div className="ml-[6px] w-[258px] h-[39px] border border-[#8a8886] rounded-[2px] flex items-center pl-[10px] text-[18.500px] text-[#444]">
            <SearchGlyph />
            <span className="ml-[8px]">Search</span>
          </div>
          <div className="pt-[8px]">
            {fields.map(([name, sum]) => (
              <div key={name} className="h-[36px] flex items-center pl-[66px] text-[16.500px] text-[#444]">
                {name === "User continent" ? (
                  <div className="w-[18px] h-[18px] rounded-[3px] bg-[#117865] flex items-center justify-center">
                    <svg width="12" height="10" viewBox="0 0 12 10" fill="none" stroke="#fff" strokeWidth="1.300">
                      <path d="M1 5L4.500 8.500L11 1" />
                    </svg>
                  </div>
                ) : (
                  <div className="w-[18px] h-[18px] rounded-[3px] border border-[#8a8886]" />
                )}
                <div className="w-[40px] flex justify-center pl-[4px]">
                  {sum === 1 && (
                    <svg width="16" height="16" viewBox="0 0 16 16" fill="none" stroke="#252423" strokeWidth="1.200">
                      <path d="M15 1H1L8 8L1 15H15" />
                    </svg>
                  )}
                </div>
                <span className="whitespace-nowrap">{name}</span>
              </div>
            ))}
          </div>
          <div className="absolute left-[252px] top-[209px] w-[12px] h-[476px] bg-[#c8c6c4]" />
        </div>
      </div>

      {/* status bar */}
      <div className="h-[36px] shrink-0 border-t border-[#e1dfdd] flex items-center text-[17px] text-[#444]">
        <span className="ml-[6px] w-[88px] whitespace-nowrap">Page 1 of 1</span>
        <span className="ml-[1508px] text-[#605e5c] font-bold w-[6px]">-</span>
        <div className="relative ml-[8px] w-[150px] h-[1px] bg-[#605e5c]">
          <div className="absolute left-[33px] -top-[9px] w-[6px] h-[18px] bg-[#605e5c]" />
          <div className="absolute left-[75px] -top-[4px] w-[1px] h-[9px] bg-[#605e5c]" />
        </div>
        <svg width="12" height="12" viewBox="0 0 12 12" stroke="#444" strokeWidth="1.500" className="ml-[9px]">
          <path d="M0 6H12M6 0V12" />
        </svg>
        <span className="ml-[18px] text-[#605e5c] w-[36px] whitespace-nowrap">53%</span>
        <svg width="24" height="20" viewBox="0 0 24 20" fill="none" stroke="#605e5c" strokeWidth="1.500" className="ml-[29px]">
          <rect x="1" y="1" width="22" height="18" />
          <path d="M5 8V5H8M16 5H19V8M19 12V15H16M8 15H5V12" strokeWidth="1.300" />
        </svg>
      </div>

      <Taskbar />
    </div>
  );
}
